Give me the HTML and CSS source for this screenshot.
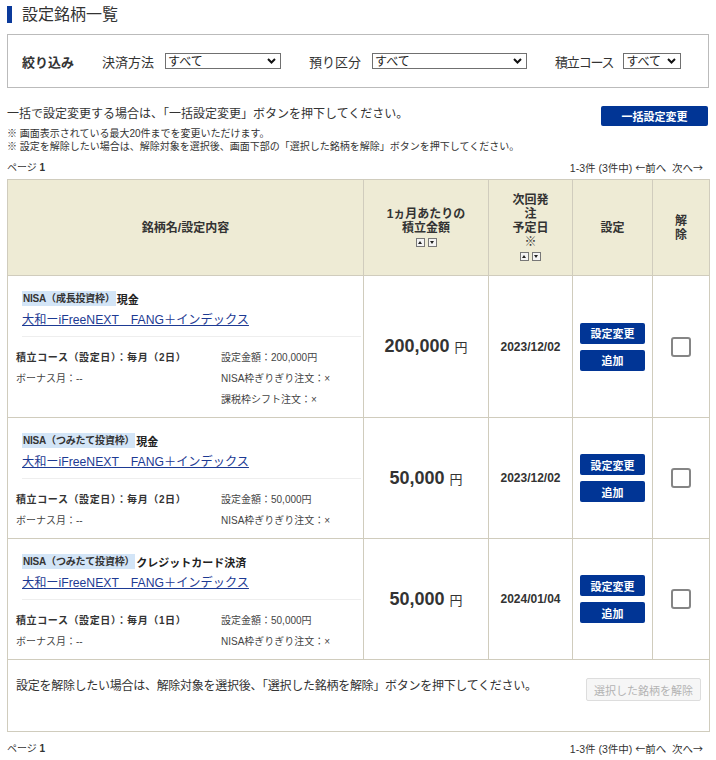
FILE: index.html
```html
<!DOCTYPE html>
<html lang="ja">
<head>
    <meta charset="UTF-8">
    <meta name="viewport" content="width=device-width, initial-scale=1.0">
    <title>設定銘柄一覧</title>
    <link rel="stylesheet" href="styles.css">
</head>
<body>

<div class="page">
    <h1 class="page-title">設定銘柄一覧</h1>

    <div class="filter-box">
        <span class="filter-label">絞り込み</span>
        <label class="filter-item">決済方法
            <span class="select-wrap sel-pay">
                <select><option>すべて</option></select>
                <svg class="chev" width="9" height="6" viewBox="0 0 9 6"><path d="M1 1l3.5 3.5L8 1" fill="none" stroke="#111" stroke-width="2"/></svg>
            </span>
        </label>
        <label class="filter-item">預り区分
            <span class="select-wrap sel-acc">
                <select><option>すべて</option></select>
                <svg class="chev" width="9" height="6" viewBox="0 0 9 6"><path d="M1 1l3.5 3.5L8 1" fill="none" stroke="#111" stroke-width="2"/></svg>
            </span>
        </label>
        <label class="filter-item tight"><span class="filter-name">積立コース</span>
            <span class="select-wrap sel-course">
                <select><option>すべて</option></select>
                <svg class="chev" width="9" height="6" viewBox="0 0 9 6"><path d="M1 1l3.5 3.5L8 1" fill="none" stroke="#111" stroke-width="2"/></svg>
            </span>
        </label>
    </div>

    <div class="bulk-row">
        <p>一括で設定変更する場合は、「一括設定変更」ボタンを押下してください。</p>
        <button class="btn-navy btn-bulk">一括設定変更</button>
    </div>
    <ul class="notes">
        <li>※ 画面表示されている最大20件までを変更いただけます。</li>
        <li>※ 設定を解除したい場合は、解除対象を選択後、画面下部の「選択した銘柄を解除」ボタンを押下してください。</li>
    </ul>

    <div class="pager">
        <span>ページ <b>1</b></span>
        <span class="pager-nav">1-3件 (3件中) <span class="arrow">←</span>前へ&nbsp; 次へ<span class="arrow">→</span></span>
    </div>

    <table class="fund-table">
        <thead>
            <tr>
                <th class="c-name">銘柄名/設定内容</th>
                <th class="c-amount">1ヵ月あたりの<br>積立金額
                    <div class="sort"><span class="sort-btn up"></span><span class="sort-btn down"></span></div>
                </th>
                <th class="c-date">次回発<br>注<br>予定日<br>※
                    <div class="sort"><span class="sort-btn up"></span><span class="sort-btn down"></span></div>
                </th>
                <th class="c-set">設定</th>
                <th class="c-del">解<br>除</th>
            </tr>
        </thead>
        <tbody>
            <tr>
                <td class="name-cell">
                    <div class="fund-head">
                        <div class="tags"><span class="badge">NISA（成長投資枠）</span><span class="pay">現金</span></div>
                        <a href="#" class="fund-link">大和ーiFreeNEXT　FANG＋インデックス</a>
                    </div>
                    <div class="details">
                        <span class="strong">積立コース（設定日）：毎月（2日）</span><span>設定金額：200,000円</span>
                        <span>ボーナス月：--</span><span>NISA枠ぎりぎり注文：×</span>
                        <span></span><span>課税枠シフト注文：×</span>
                    </div>
                </td>
                <td class="amount">200,000<small>円</small></td>
                <td class="date">2023/12/02</td>
                <td class="actions"><button class="btn-navy btn-sm">設定変更</button><button class="btn-navy btn-sm">追加</button></td>
                <td class="check"><input type="checkbox"></td>
            </tr>
            <tr>
                <td class="name-cell">
                    <div class="fund-head">
                        <div class="tags"><span class="badge">NISA（つみたて投資枠）</span><span class="pay">現金</span></div>
                        <a href="#" class="fund-link">大和ーiFreeNEXT　FANG＋インデックス</a>
                    </div>
                    <div class="details">
                        <span class="strong">積立コース（設定日）：毎月（2日）</span><span>設定金額：50,000円</span>
                        <span>ボーナス月：--</span><span>NISA枠ぎりぎり注文：×</span>
                    </div>
                </td>
                <td class="amount">50,000<small>円</small></td>
                <td class="date">2023/12/02</td>
                <td class="actions"><button class="btn-navy btn-sm">設定変更</button><button class="btn-navy btn-sm">追加</button></td>
                <td class="check"><input type="checkbox"></td>
            </tr>
            <tr>
                <td class="name-cell">
                    <div class="fund-head">
                        <div class="tags"><span class="badge">NISA（つみたて投資枠）</span><span class="pay">クレジットカード決済</span></div>
                        <a href="#" class="fund-link">大和ーiFreeNEXT　FANG＋インデックス</a>
                    </div>
                    <div class="details">
                        <span class="strong">積立コース（設定日）：毎月（1日）</span><span>設定金額：50,000円</span>
                        <span>ボーナス月：--</span><span>NISA枠ぎりぎり注文：×</span>
                    </div>
                </td>
                <td class="amount">50,000<small>円</small></td>
                <td class="date">2024/01/04</td>
                <td class="actions"><button class="btn-navy btn-sm">設定変更</button><button class="btn-navy btn-sm">追加</button></td>
                <td class="check"><input type="checkbox"></td>
            </tr>
        </tbody>
        <tfoot>
            <tr>
                <td colspan="5">
                    <div class="release-row">
                        <p>設定を解除したい場合は、解除対象を選択後、「選択した銘柄を解除」ボタンを押下してください。</p>
                        <button class="btn-release" disabled>選択した銘柄を解除</button>
                    </div>
                </td>
            </tr>
        </tfoot>
    </table>

    <div class="pager bottom">
        <span>ページ <b>1</b></span>
        <span class="pager-nav">1-3件 (3件中) <span class="arrow">←</span>前へ&nbsp; 次へ<span class="arrow">→</span></span>
    </div>
</div>

</body>
</html>
```

FILE: styles.css
```css
body {
    margin: 0;
    font-family: "Liberation Sans", "Noto Sans CJK JP", sans-serif;
    color: #333;
    background: #fff;
}
.page {
    width: 702px;
    padding: 0 7px;
}
p {
    margin: 0;
}

/* title */
.page-title {
    margin: 6px 0 0;
    padding-left: 10px;
    border-left: 5px solid #0b3a9b;
    font-size: 16px;
    font-weight: normal;
    line-height: 17px;
    color: #333;
}

/* filter */
.filter-box {
    display: flex;
    align-items: center;
    height: 52px;
    margin-top: 11px;
    padding-left: 14px;
    border: 1px solid #bbb;
    font-size: 13px;
    white-space: nowrap;
}
.filter-label {
    flex: none;
    font-weight: bold;
    margin-right: 28px;
}
.filter-item {
    flex: none;
    display: flex;
    align-items: center;
    gap: 11px;
    margin-right: 28px;
}
.filter-item.tight {
    gap: 10px;
}
.filter-item.tight .filter-name {
    letter-spacing: -1.2px;
}
.select-wrap {
    position: relative;
    display: inline-block;
    height: 16px;
}
.select-wrap select {
    appearance: none;
    -webkit-appearance: none;
    box-sizing: border-box;
    width: 100%;
    height: 16px;
    margin: 0;
    padding: 1px 2px 0;
    border: 1px solid #707070;
    border-radius: 0;
    background: #fff;
    font-family: inherit;
    font-size: 12px;
    line-height: 14px;
    color: #222;
}
.select-wrap .chev {
    position: absolute;
    right: 5px;
    top: 5px;
    pointer-events: none;
}
.sel-pay { width: 116px; }
.sel-acc { width: 155px; }
.sel-course { width: 58px; }

/* bulk change */
.bulk-row {
    display: flex;
    justify-content: space-between;
    align-items: center;
    margin-top: 18px;
    font-size: 12px;
}
.bulk-row p {
    margin-top: -8px;
}
.btn-navy {
    display: block;
    border: 0;
    border-radius: 2px;
    background: #013595;
    color: #fff;
    font-family: inherit;
    font-weight: bold;
    cursor: pointer;
    padding: 0;
}
.btn-bulk {
    width: 107px;
    height: 20px;
    font-size: 11px;
    margin-right: 1px;
}
.notes {
    list-style: none;
    margin: 1px 0 0;
    padding: 0;
    font-size: 10px;
    line-height: 13px;
}

/* pager */
.pager {
    display: flex;
    justify-content: space-between;
    margin-top: 8px;
    padding-right: 6px;
    font-size: 10px;
    line-height: 14px;
}
.pager-nav {
    font-size: 10.5px;
}
.pager-nav .arrow {
    font-family: "Noto Sans CJK JP", sans-serif;
    font-size: 10px;
}
.pager.bottom {
    margin-top: 10px;
}

/* table */
.fund-table {
    width: 702px;
    margin-top: 4px;
    border-collapse: collapse;
    table-layout: fixed;
}
.fund-table th,
.fund-table td {
    border: 1px solid #d0ccbd;
    padding: 0;
    vertical-align: middle;
}
.fund-table th {
    height: 95px;
    background: #eeebd5;
    font-size: 12px;
    line-height: 14px;
    text-align: center;
    color: #333;
}
.c-name { width: 355px; }
.c-amount { width: 124px; }
.c-date { width: 83px; }
.c-set { width: 79px; }
.c-del { width: 56px; }

.sort {
    display: flex;
    justify-content: center;
    gap: 3px;
    margin-top: 3px;
    height: 10px;
}
.sort-btn {
    position: relative;
    box-sizing: border-box;
    width: 9px;
    height: 9px;
    border: 1px solid #777;
    background: #f4f4f4;
}
.sort-btn::after {
    content: "";
    position: absolute;
    left: 1px;
    border-left: 2.5px solid transparent;
    border-right: 2.5px solid transparent;
}
.sort-btn.up::after {
    top: 2px;
    border-bottom: 3px solid #222;
}
.sort-btn.down::after {
    top: 2px;
    border-top: 3px solid #222;
}

/* fund cell */
.name-cell {
    padding: 14px 0 7px 8px !important;
}
.fund-head {
    margin-left: 6px;
    margin-right: 2px;
    padding-bottom: 6px;
    border-bottom: 1px solid #eee;
}
.tags {
    display: flex;
    align-items: center;
    height: 17px;
}
.badge {
    display: inline-block;
    padding: 0 1px;
    background: #d3e5f7;
    font-size: 10px;
    line-height: 15px;
    font-weight: bold;
    color: #333;
    letter-spacing: -0.2px;
}
.pay {
    margin-left: 1px;
    font-size: 11px;
    font-weight: bold;
    color: #222;
}
.fund-link {
    display: block;
    margin-top: 3px;
    font-size: 12.2px;
    line-height: 20px;
    color: #1d3a93;
}
.details {
    display: grid;
    grid-template-columns: 205px 1fr;
    margin-top: 10px;
    font-size: 10px;
    line-height: 21px;
    color: #444;
}
.details .strong {
    font-weight: bold;
    color: #333;
    letter-spacing: 0.6px;
}

.amount {
    text-align: center;
    font-size: 18px;
    font-weight: bold;
    color: #333;
}
.amount small {
    margin-left: 5px;
    font-size: 13px;
    font-weight: normal;
}
.date {
    text-align: center;
    font-size: 12px;
    font-weight: bold;
    color: #333;
}
.actions .btn-sm {
    width: 65px;
    height: 21px;
    margin: 0 auto;
    font-size: 11px;
}
.actions .btn-sm + .btn-sm {
    margin-top: 6px;
}
.check {
    text-align: center;
}
.check input {
    appearance: none;
    -webkit-appearance: none;
    display: block;
    box-sizing: border-box;
    width: 20px;
    height: 20px;
    margin: 0 auto;
    border: 2px solid #858585;
    border-radius: 3px;
    background: #fff;
}

/* footer of the table */
.fund-table tfoot td {
    padding: 18px 8px 30px 8px;
}
.release-row {
    display: flex;
    justify-content: space-between;
    align-items: flex-start;
    font-size: 12px;
    line-height: 16px;
}
.release-row p {
    letter-spacing: -0.28px;
}
.btn-release {
    width: 115px;
    height: 23px;
    margin-right: 0;
    border: 1px solid #ddd;
    border-radius: 2px;
    background: #f6f6f6;
    color: #b3b3b3;
    font-family: inherit;
    font-size: 11px;
    padding: 0;
}
```
